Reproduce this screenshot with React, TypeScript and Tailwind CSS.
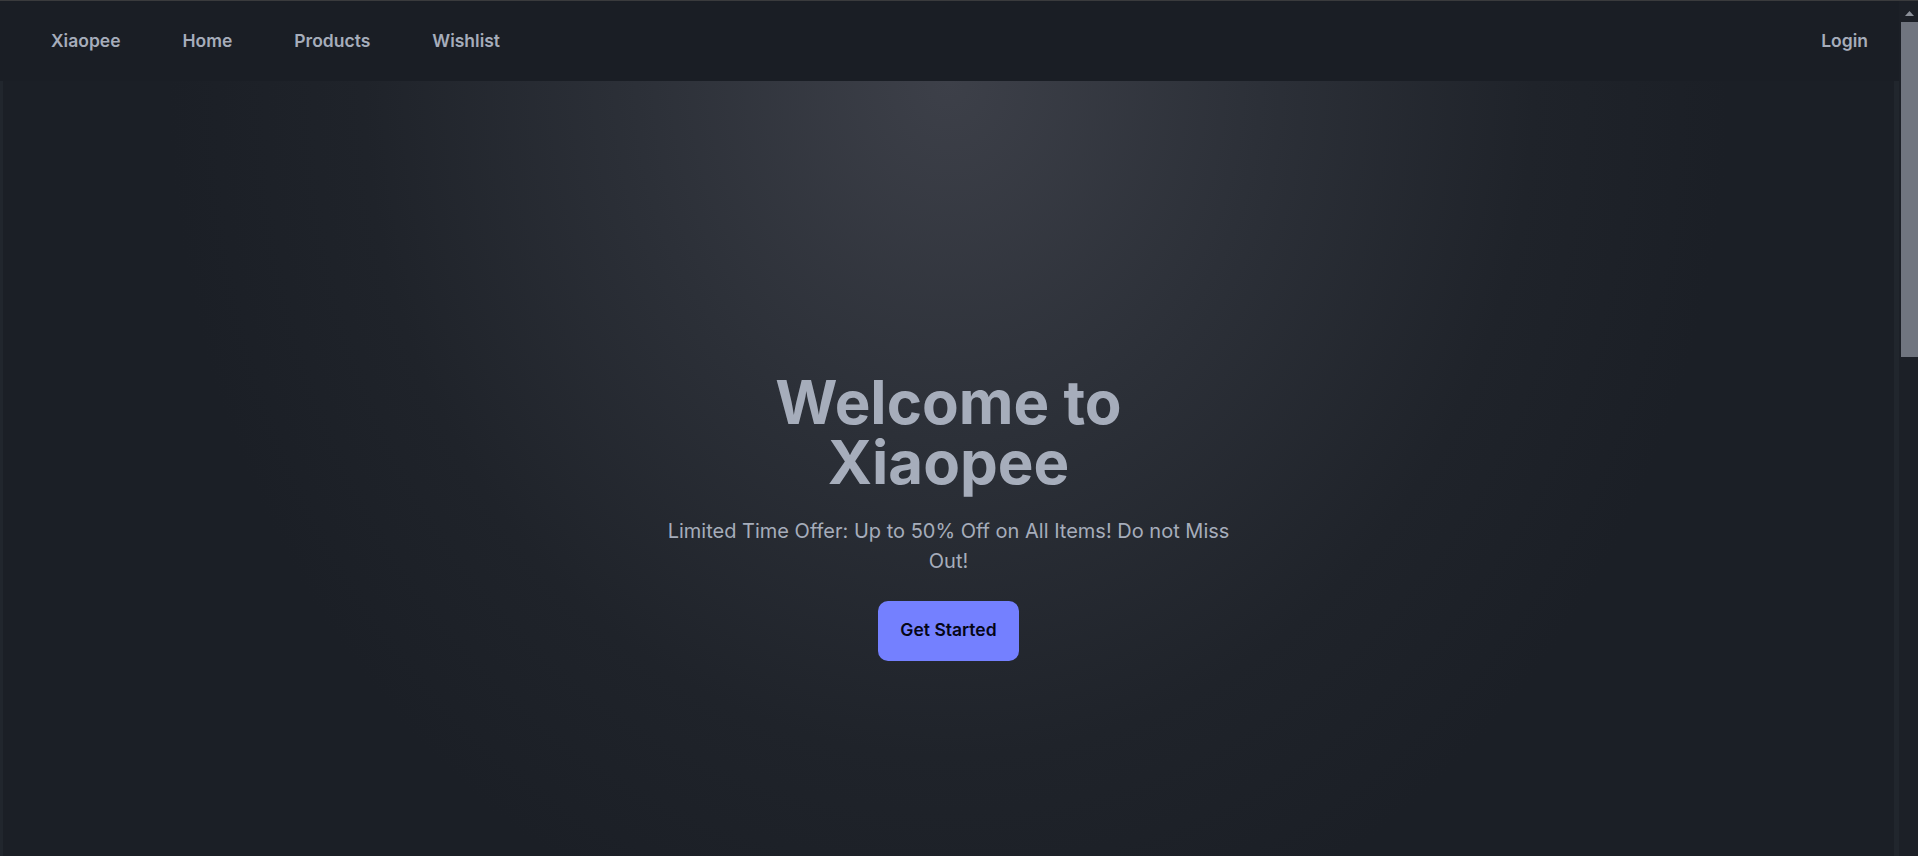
import React from 'react';

const links = ['Home', 'Products', 'Wishlist'];

function Scrollbar() {
  // the window's scrollbar as it shows in the screenshot
  return (
    <aside className="flex w-[19px] shrink-0 flex-col bg-[#1c2027]">
      <div className="flex h-[19px] items-center justify-center">
        <svg width="9" height="5" viewBox="0 0 9 5" className="mt-[6px] ml-[1px]">
          <path d="M0 5 L4.5 0 L9 5 Z" fill="#8b9099" />
        </svg>
      </div>
      <div className="mt-[2px] ml-[2px] h-[335px] bg-[#70757f]" />
    </aside>
  );
}

export default function App() {
  return (
    <div className="flex h-screen overflow-hidden border-t border-[#3a3b3d] bg-[#1b1f26] [font-family:Inter,'Noto_Sans',sans-serif]">
      <main className="min-w-0 flex-1">
        <nav className="flex h-20 items-center bg-[#1a1e25] pl-[51px] pr-[31px] text-[17.5px] font-semibold text-[#a6adbb]">
          <div className="flex items-center gap-[62px]">
            <a className="cursor-pointer">Xiaopee</a>
            {links.map((l) => (
              <a key={l} className="cursor-pointer">
                {l}
              </a>
            ))}
          </div>
          <a className="ml-auto cursor-pointer">Login</a>
        </nav>

        {/* hero */}
        <section className="flex h-[870px] items-center justify-center border-l-[3px] border-r-[5px] border-[#21262d] bg-[radial-gradient(ellipse_780px_900px_at_50%_0%,#3d4049_0%,#2c3038_40%,#1f232a_75%,#1b1f26_100%)]">
          <div className="flex flex-col items-center text-center text-[#a6adbb]">
            <h1 className="text-[60px] font-bold leading-[60px] text-[#a6adbb]">
              Welcome to
              <br />
              Xiaopee
            </h1>
            <p className="mt-[24px] max-w-[576px] text-[20px] leading-[30px]">
              Limited Time Offer: Up to 50% Off on All Items! Do not Miss Out!
            </p>
            <button className="mt-[25px] h-[60px] rounded-[10px] bg-[#7480ff] px-[22px] text-[17.5px] font-semibold text-[#050617]">
              Get Started
            </button>
          </div>
        </section>
      </main>
      <Scrollbar />
    </div>
  );
}
